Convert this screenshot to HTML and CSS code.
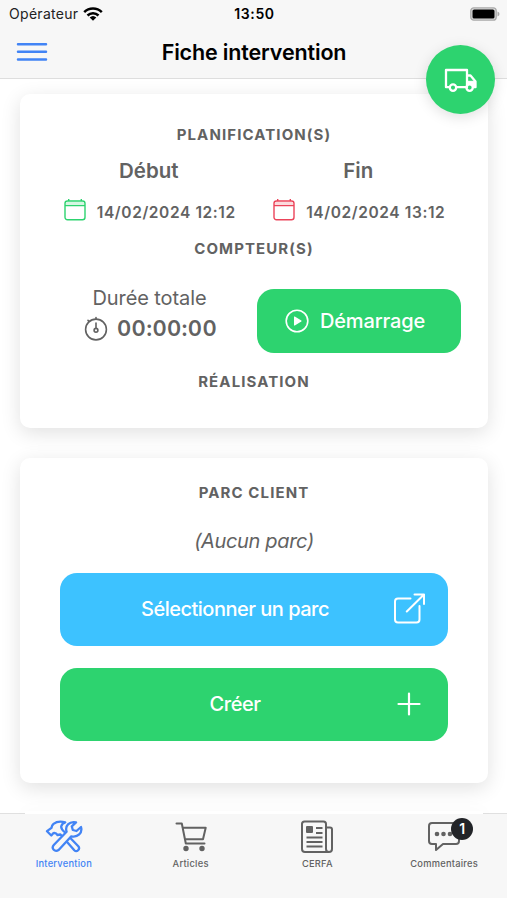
FILE: index.html
```html
<!DOCTYPE html>
<html lang="fr">
<head>
<meta charset="utf-8">
<title>Fiche intervention</title>
<link rel="stylesheet" href="styles.css">
</head>
<body>
<div class="app">
  <header class="header">
    <div class="status">
      <span class="carrier"><span>Opérateur</span>
        <svg width="20" height="14" viewBox="0 0 20 14"><g fill="none" stroke="#000" stroke-width="2.5"><path d="M1.2 5.2a12.6 12.6 0 0 1 17.6 0"/><path d="M4.5 8.5a7.9 7.9 0 0 1 11 0"/></g><path d="M6.7 10.6a4.8 4.8 0 0 1 6.6 0L10 13.8z"/></svg>
      </span>
      <span class="clock">13:50</span>
      <svg class="battery" width="30" height="14" viewBox="0 0 30 14"><rect x=".8" y=".8" width="25.4" height="12.4" rx="3" fill="#ddd" stroke="#aaa" stroke-width="1.3"/><rect x="2.5" y="2.4" width="22" height="9.2" rx="1.6"/><path d="M27.5 4.5q2 .6 2 2.5t-2 2.5z" fill="#aaa"/></svg>
    </div>
    <div class="toolbar">
      <svg class="menu" width="32" height="20" viewBox="0 0 32 20"><path d="M2 2.2h28M2 9.8h28M2 17.4h28" stroke="#4284f5" stroke-width="2.5" stroke-linecap="round"/></svg>
      <h1>Fiche intervention</h1>
    </div>
    <button class="fab" aria-label="Trajet">
      <svg width="34" height="26" viewBox="0 0 34 26" fill="none" stroke="#fff" stroke-width="2.3" stroke-linejoin="round"><path d="M5.8 20.200H2V3h21v17.200H12.500M23 8.500h3.500l5 6v5.700h-2.800"/><circle cx="9" cy="20.600" r="3.200"/><circle cx="25.600" cy="20.600" r="3.200"/><path d="M24 14.300h7v5h-2.200q-1.500-2.500-4.800-2.300z" fill="#fff" stroke-width="1"/></svg>
    </button>
  </header>
  <main class="content">
    <section class="card planning">
      <h2>PLANIFICATION(S)</h2>
      <div class="dates">
        <div class="date"><h3>Début</h3><div class="stamp"><svg class="green" width="22" height="22" viewBox="0 0 22 22"><rect x="1" y="2" width="20" height="18.8" rx="2.5"/><path d="M1 6.5h20M4.7 0v2M17.3 0v2"/><path class="tint" d="M2 3h18v3H2z"/></svg><b>14/02/2024 12:12</b></div></div>
        <div class="date"><h3>Fin</h3><div class="stamp"><svg class="red" width="22" height="22" viewBox="0 0 22 22"><rect x="1" y="2" width="20" height="18.8" rx="2.5"/><path d="M1 6.5h20M4.7 0v2M17.3 0v2"/><path class="tint" d="M2 3h18v3H2z"/></svg><b>14/02/2024 13:12</b></div></div>
      </div>
      <h2>COMPTEUR(S)</h2>
      <div class="counter">
        <div class="total"><div class="label">Durée totale</div><div class="time"><svg width="24" height="25" viewBox="0 0 24 25" fill="none" stroke="#626262" stroke-width="1.6" stroke-linecap="round"><circle cx="12" cy="13.5" r="10.4"/><circle cx="12" cy="14.3" r="1.9"/><path d="M12 7v5.5M12 1.6v1.2M4 4.4l1 1"/></svg><b>00:00:00</b></div></div>
        <button class="btn start"><svg width="24" height="24" viewBox="0 0 24 24"><circle cx="12" cy="12" r="10.8" fill="none" stroke="#fff" stroke-width="1.6"/><path d="M9 8v8q0 .8.8.4l6.5-3.800q.7-.6 0-1.100L9.800 7.600Q9 7.200 9 8z" fill="#fff"/></svg><span>Démarrage</span></button>
      </div>
      <h2>RÉALISATION</h2>
    </section>
    <section class="card park">
      <h2>PARC CLIENT</h2>
      <p>(Aucun parc)</p>
      <button class="btn wide blue"><span>Sélectionner un parc</span><svg width="32" height="32" viewBox="0 0 32 32" fill="none" stroke="#fff" stroke-width="2" stroke-linecap="round" stroke-linejoin="round"><path d="M17.500 5.500H5Q2 5.500 2 8.500V26.500Q2 29.500 5 29.500H23.500Q26.500 29.500 26.500 26.500V13M21.500 1.500H31V11M31 1.500L13.800 18.500"/></svg></button>
      <button class="btn wide"><span>Créer</span><svg width="32" height="32" viewBox="0 0 32 32"><path d="M5.500 16h21M16 5.500v21" stroke="#fff" stroke-width="2.200" stroke-linecap="round"/></svg></button>
    </section>
    <section class="card next"></section>
  </main>
  <nav class="tabs">
    <a class="tab active"><svg width="38" height="34" viewBox="0 0 38 34" fill="none" stroke="#4284f5" stroke-width="2.300" stroke-linejoin="round" stroke-linecap="round"><path d="M15.500 14.500L29.300 30.200q1.900 1.900 3.800 0t.2-4L19.500 12Q16 9 16.200 6.500q.5-3 4-4.200-7-2-11.700 1.500-1.800 1.500-2 4L2 11.200l4.300 4.300 2-2.300q2.500-.8 4.200 1.800z"/><path d="M36 7L31.500 11 27.800 10 26.800 6.400 31 2.400q-5-1-8 2-2.800 3-1.400 7.300L9 24.800q-2.500 2.800-.3 5t5.200 0l12.400-13.500q5 1 7.900-1.900Q37.300 11.500 36 7z" fill="#f7f7f7"/></svg><span>Intervention</span></a>
    <a class="tab"><svg width="34" height="34" viewBox="0 0 34 34" fill="none" stroke="#626262" stroke-width="2" stroke-linejoin="round" stroke-linecap="round"><path d="M2.500 3.500h5.300l4 20h18.700M8.500 7.700h23.200L29 19.300H11"/><circle cx="12" cy="28.500" r="1.700" fill="#626262"/><circle cx="28" cy="28.500" r="1.700" fill="#626262"/></svg><span>Articles</span></a>
    <a class="tab"><svg width="34" height="34" viewBox="0 0 34 34" fill="none" stroke="#626262" stroke-width="2" stroke-linejoin="round"><path d="M29 32H5q-3 0-3-3V4q0-2.500 2.500-2.500h19Q26 1.500 26 4v25q0 3 3 3t3-3V9.500Q32 7.500 30 7.500h-4M16 8h6.500M16 13h6.500M6.500 17.500h16M6.500 22h16M6.500 26.500h16"/><path d="M7 7h5v5H7z" fill="#626262"/></svg><span>CERFA</span></a>
    <a class="tab"><span class="icon-wrap"><svg width="34" height="34" viewBox="0 0 34 34" fill="none" stroke="#626262" stroke-width="2" stroke-linejoin="round"><path d="M5 3h24q3 0 3 3v15q0 3-3 3H16L9 30V24H5q-3 0-3-3V6q0-3 3-3z"/><g fill="#626262" stroke="none"><circle cx="10" cy="14" r="2.300"/><circle cx="16.500" cy="14" r="2.300"/><circle cx="23" cy="14" r="2.300"/></g></svg><i class="badge">1</i></span><span>Commentaires</span></a>
  </nav>
</div>
</body>
</html>
```
FILE: styles.css
```css
* { box-sizing: border-box; }
body { margin: 0; font-family: Inter, sans-serif; color: #626262; background: #fff; }
h1, h2, h3, p { margin: 0; }
svg { display: block; flex: none; }
button { border: 0; font-family: inherit; }
.app { height: 900px; display: flex; flex-direction: column; overflow: hidden; position: relative; }
.header { height: 79px; flex: none; background: #f7f7f7; border-bottom: 1px solid #dedede; position: relative; z-index: 3; color: #000; }
.status { height: 27px; display: grid; grid-template-columns: 1fr auto 1fr; align-items: center; padding: 0 7px 0 9px; font-size: 14px; }
.carrier { display: flex; align-items: center; gap: 5px; color: #222; letter-spacing: .3px; }
.clock { font-weight: 600; letter-spacing: .6px; }
.battery { justify-self: end; }
.toolbar { height: 50px; display: grid; grid-template-columns: 32px 1fr 32px; align-items: center; padding: 0 15px 0 16px; }
.toolbar h1 { font-size: 21.500px; line-height: 26px; font-weight: 600; letter-spacing: -.15px; text-align: center; }
.fab { position: absolute; left: 426px; top: 45px; width: 69px; height: 69px; padding: 0; border-radius: 50%; background: #2dd36f; box-shadow: 0 3px 14px rgba(0,0,0,.13); display: flex; align-items: center; justify-content: center; }
.content { flex: 1; min-height: 0; padding: 15px 19px 0 20px; position: relative; z-index: 2; }
.card { background: #fff; border-radius: 10px; box-shadow: 0 5px 20px rgba(0,0,0,.12); text-align: center; }
.card h2 { font-size: 15px; line-height: 20px; font-weight: 650; letter-spacing: 1.1px; }
.planning { height: 334px; padding-top: 31px; margin-bottom: 30px; }
.dates { display: grid; grid-template-columns: 1fr 1fr; padding: 13px 25px 0 24px; height: 94px; }
.date h3 { font-size: 20.500px; line-height: 26px; font-weight: 600; }
.stamp { display: flex; justify-content: center; align-items: center; gap: 11px; margin: 16px -1px 0 1px; height: 24px; }
.stamp svg { margin-bottom: 4px; fill: none; stroke-width: 1.4; }
.stamp b { font-size: 15.500px; font-weight: 600; letter-spacing: .6px; white-space: nowrap; }
.green { stroke: #2dd36f; }
.red { stroke: #eb445a; }
.green .tint { fill: #d5f6e2; stroke: none; }
.red .tint { fill: #fbdadd; stroke: none; }
.counter { display: flex; height: 113px; padding: 30px 27px 0 64px; justify-content: space-between; }
.total { width: 134px; }
.label { font-size: 20px; line-height: 24px; margin: -3px 3px 0 0; letter-spacing: -.100px; }
.time { display: flex; align-items: center; gap: 9px; height: 36px; }
.time b { font-size: 22px; font-weight: 600; letter-spacing: .35px; font-variant-numeric: tabular-nums; }
.btn { display: flex; align-items: center; background: #2dd36f; color: #fff; border-radius: 17px; font-size: 20px; font-weight: 450; letter-spacing: -.150px; }
.start { width: 204px; height: 64px; justify-content: center; gap: 11px; padding: 0 8px 0 0; }
.park { height: 325px; padding: 25px 40px 0; margin-bottom: 28px; }
.park p { font-size: 20px; line-height: 26px; font-style: italic; letter-spacing: -.350px; margin: 25px 0 18.500px; }
.wide { width: 388px; height: 73px; padding: 0 23px 0 17px; margin-bottom: 22px; letter-spacing: -.500px; }
.wide span { flex: 1; text-align: center; }
.wide.blue { background: #3dc2ff; }
.next { height: 3px; margin: 0 5px; border-radius: 0; clip-path: inset(-24px -24px 0); }
.tabs { height: 87px; flex: none; display: grid; grid-template-columns: repeat(4, 1fr); background: #f7f7f7; border-top: 1px solid #e0e0e0; border-bottom: 2px solid #fff; position: relative; z-index: 1; }
.tab { display: flex; flex-direction: column; align-items: center; padding: 6px 0 0 1px; font-size: 9.300px; font-weight: 550; letter-spacing: .25px; }
.tab > span:last-child { line-height: 12px; margin-top: 4px; }
.active { color: #4284f5; }
.icon-wrap { position: relative; }
.badge { position: absolute; left: 24px; top: -2px; width: 22px; height: 22px; border-radius: 50%; background: #222428; color: #fff; font: 600 14px/22px Inter, sans-serif; text-align: center; letter-spacing: 0; }
```
